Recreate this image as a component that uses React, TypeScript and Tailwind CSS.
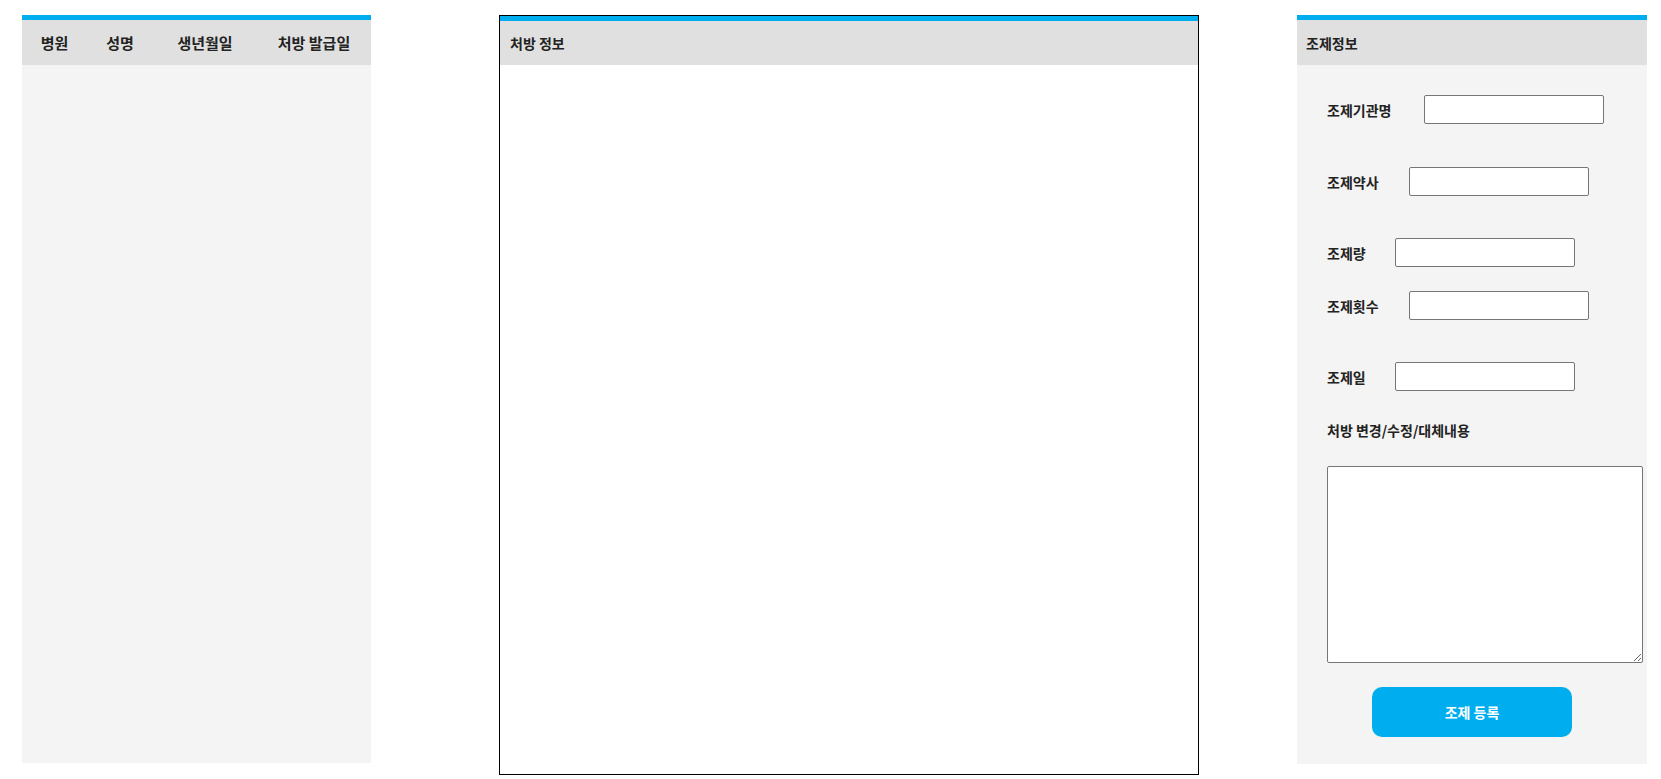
const headCols = [
  { label: "병원", w: "w-[65px]" },
  { label: "성명", w: "w-[66px]" },
  { label: "생년월일", w: "w-[104px]" },
  { label: "처방 발급일", w: "w-[114px]" },
];

function Field({ label, labelW, mt }: { label: string; labelW: string; mt: string }) {
  return (
    <div className={`flex items-center pl-[30px] ${mt}`}>
      <label className={`${labelW} shrink-0 text-[14px] font-bold leading-[20px] text-[#222]`}>{label}</label>
      <input
        type="text"
        className="h-[29px] w-[180px] rounded-[2px] border border-[#767676] bg-white px-1 outline-none"
      />
    </div>
  );
}

export default function App() {
  return (
    <div
      className="flex h-[779px] w-full items-start bg-white text-[#222]"
      style={{ fontFamily: '"Noto Sans CJK KR", "Noto Sans", sans-serif' }}
    >
      {/* 목록 */}
      <section className="ml-[22px] mt-[15px] h-[748px] w-[349px] shrink-0 border-t-[5px] border-[#00aeef] bg-[#f4f4f4]">
        <div className="flex h-[45px] items-center bg-[#e0e0e0]">
          {headCols.map((c) => (
            <div key={c.label} className={`${c.w} text-center text-[15px] font-bold leading-[20px]`}>
              {c.label}
            </div>
          ))}
        </div>
      </section>

      {/* 처방 정보 */}
      <section className="ml-[128px] mt-[15px] h-[760px] w-[700px] shrink-0 border border-black bg-white">
        <div className="h-[5px] bg-[#00aeef]" />
        <div className="flex h-[44px] items-center bg-[#e0e0e0] pl-[10px] text-[14px] font-bold leading-[20px]">
          처방 정보
        </div>
      </section>

      {/* 조제정보 */}
      <section className="ml-[98px] mt-[15px] h-[749px] w-[350px] shrink-0 border-t-[5px] border-[#00aeef] bg-[#f4f4f4]">
        <div className="flex h-[45px] items-center bg-[#e0e0e0] pl-[9px] text-[14px] font-bold leading-[20px]">
          조제정보
        </div>
        <Field label="조제기관명" labelW="w-[97px]" mt="mt-[30px]" />
        <Field label="조제약사" labelW="w-[82px]" mt="mt-[43px]" />
        <Field label="조제량" labelW="w-[68px]" mt="mt-[42px]" />
        <Field label="조제횟수" labelW="w-[82px]" mt="mt-[24px]" />
        <Field label="조제일" labelW="w-[68px]" mt="mt-[42px]" />
        <div className="mt-[29px] pl-[30px] text-[14px] font-bold leading-[20px]">처방 변경/수정/대체내용</div>
        <div className="mt-[26px] pl-[30px]">
          <textarea className="block h-[197px] w-[316px] rounded-[2px] border border-[#767676] bg-white outline-none" />
        </div>
        <div className="mt-[24px] flex justify-center">
          <button className="h-[50px] w-[200px] rounded-[10px] bg-[#00aeef] text-[14px] font-bold text-white">
            조제 등록
          </button>
        </div>
      </section>
    </div>
  );
}
